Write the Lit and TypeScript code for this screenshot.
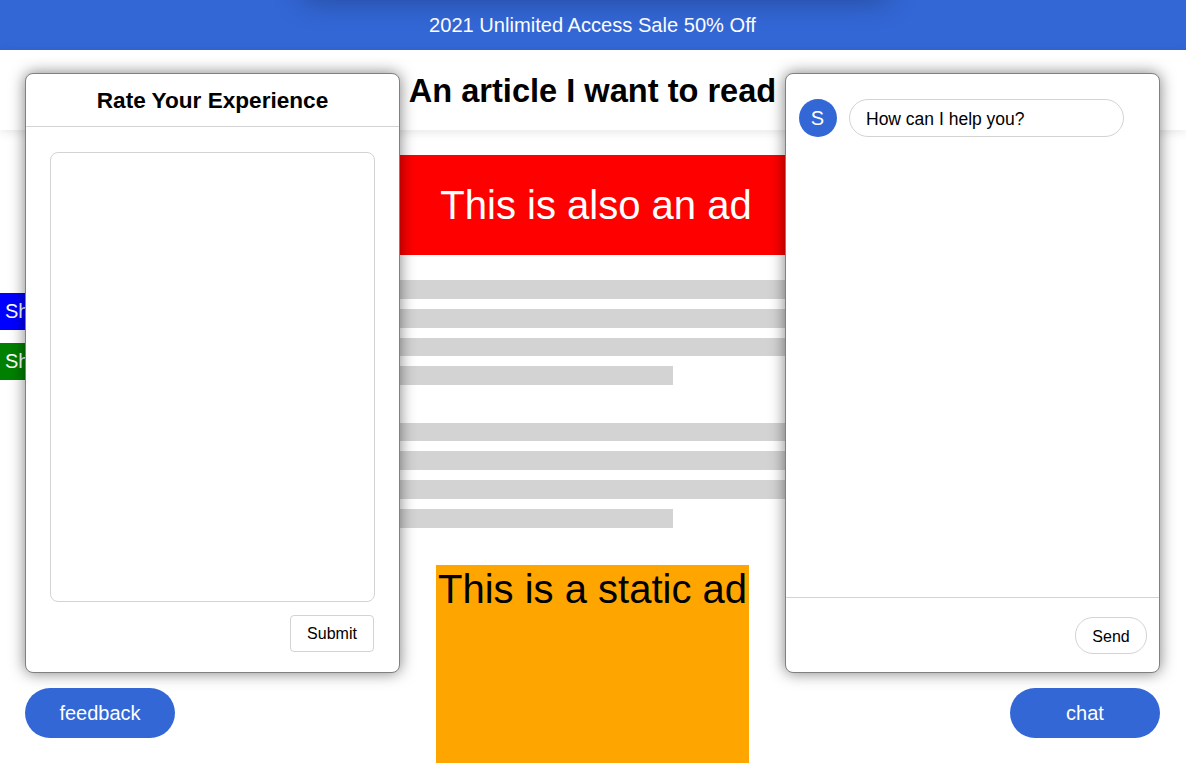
import { LitElement, html, css } from "lit";
import { customElement } from "lit/decorators.js";

@customElement("app-root")
export class AppRoot extends LitElement {
  static styles = css`
    :host {
      display: block;
      position: relative;
      height: 763px;
      overflow: hidden;
      background: #fff;
      font-family: "Liberation Sans", Arial, sans-serif;
      color: #000;
    }
    .peek {
      position: absolute;
      left: 302px;
      top: -60px;
      width: 586px;
      height: 60px;
      box-shadow: 0 0 30px rgba(0, 0, 0, 0.3);
      z-index: 2;
    }
    .banner {
      height: 50px;
      background: #3367d6;
      color: #fff;
      font-size: 20.1px;
      display: flex;
      align-items: center;
      justify-content: center;
      padding-right: 1px;
    }
    .head {
      height: 80px;
      box-sizing: border-box;
      padding: 2px 1px 0 0;
      box-shadow: 0 2px 10px rgba(0, 0, 0, 0.1);
      display: flex;
      align-items: center;
      justify-content: center;
    }
    .head h1 {
      margin: 0;
      font-size: 32.6px;
      font-weight: 700;
      line-height: 78px;
    }
    .main {
      width: 600px;
      margin: 25px auto 0;
    }
    .ad-top {
      height: 100px;
      box-sizing: border-box;
      padding-left: 6px;
      background: #f00;
      color: #fff;
      font-size: 40px;
      display: flex;
      align-items: center;
      justify-content: center;
    }
    .lines {
      margin-top: 25px;
      display: flex;
      flex-direction: column;
    }
    .line {
      height: 18.8px;
      background: #d3d3d3;
      margin-bottom: 10px;
    }
    .line.short {
      width: 380px;
    }
    .gap {
      height: 27.4px;
    }
    .ad-static {
      width: 313px;
      height: 250px;
      margin: 27.2px 0 0 143px;
      background: #ffa500;
      font-size: 40px;
      line-height: 48px;
      text-align: center;
      white-space: nowrap;
    }
    .share {
      position: absolute;
      left: 0;
      width: 60px;
      height: 37px;
      color: #fff;
      font-size: 20px;
      display: flex;
      align-items: center;
      padding-left: 5px;
      box-sizing: border-box;
    }
    .share.fb { top: 293px; background: #00f; }
    .share.tw { top: 343px; background: #008000; }
    .panel {
      position: absolute;
      top: 73px;
      width: 375px;
      height: 600px;
      box-sizing: border-box;
      background: #fff;
      border: 1px solid #808080;
      border-radius: 8px;
      box-shadow: 0 0 15px rgba(0, 0, 0, 0.5);
      display: flex;
      flex-direction: column;
      z-index: 3;
    }
    .feedback { left: 25px; }
    .chat { left: 785px; }
    .panel h2 {
      margin: 0;
      height: 52px;
      box-sizing: content-box;
      flex: none;
      border-bottom: 1px solid #d3d3d3;
      font-size: 22.6px;
      font-weight: 700;
      line-height: 54px;
      text-align: center;
    }
    .form {
      flex: 1;
      display: flex;
      flex-direction: column;
      padding: 25px 24px 20px 24px;
      min-height: 0;
    }
    .area {
      flex: 1;
      border: 1px solid #d3d3d3;
      border-radius: 8px;
    }
    .form-foot {
      display: flex;
      justify-content: flex-end;
      margin-top: 13px;
    }
    button {
      font-family: inherit;
      font-size: 16px;
      color: #000;
      background: #fff;
      border: 1px solid #d3d3d3;
      padding: 0;
    }
    .submit {
      width: 84px;
      height: 37px;
      border-radius: 4px;
      margin-right: 1px;
    }
    .messages {
      flex: 1;
      padding: 25px 13px;
      display: flex;
      align-items: flex-start;
      gap: 12px;
    }
    .avatar {
      width: 38px;
      height: 38px;
      border-radius: 50%;
      background: #3367d6;
      color: #fff;
      font-size: 20px;
      display: flex;
      align-items: center;
      justify-content: center;
      flex: none;
      padding-right: 1px;
      box-sizing: border-box;
    }
    .bubble {
      width: 275px;
      height: 38px;
      box-sizing: border-box;
      border: 1px solid #d3d3d3;
      border-radius: 19px;
      font-size: 17.5px;
      padding: 3px 0 0 16px;
      display: flex;
      align-items: center;
    }
    .chat-foot {
      height: 75px;
      flex: none;
      box-sizing: border-box;
      border-top: 1px solid #d3d3d3;
      display: flex;
      justify-content: flex-end;
      align-items: flex-start;
      padding: 19px 12px 0 0;
    }
    .send {
      width: 72px;
      height: 37px;
      border-radius: 18px;
      padding-top: 2px;
    }
    .fab {
      position: absolute;
      top: 688px;
      width: 150px;
      height: 50px;
      border: none;
      border-radius: 25px;
      background: #3367d6;
      color: #fff;
      font-size: 20px;
      z-index: 3;
    }
    .fab.l { left: 25px; }
    .fab.r { left: 1010px; }
  `;

  render() {
    return html`
      <div class="peek"></div>
      <div class="banner">2021 Unlimited Access Sale 50% Off</div>
      <header class="head"><h1>An article I want to read</h1></header>
      <main class="main">
        <div class="ad-top">This is also an ad</div>
        <div class="lines">
          <div class="line"></div>
          <div class="line"></div>
          <div class="line"></div>
          <div class="line short"></div>
          <div class="gap"></div>
          <div class="line"></div>
          <div class="line"></div>
          <div class="line"></div>
          <div class="line short"></div>
        </div>
        <div class="ad-static">This is a static ad</div>
      </main>
      <div class="share fb">Share</div>
      <div class="share tw">Share</div>
      <section class="panel feedback">
        <h2>Rate Your Experience</h2>
        <div class="form">
          <div class="area"></div>
          <div class="form-foot"><button class="submit">Submit</button></div>
        </div>
      </section>
      <section class="panel chat">
        <div class="messages">
          <div class="avatar">S</div>
          <div class="bubble">How can I help you?</div>
        </div>
        <div class="chat-foot"><button class="send">Send</button></div>
      </section>
      <button class="fab l">feedback</button>
      <button class="fab r">chat</button>
    `;
  }
}
